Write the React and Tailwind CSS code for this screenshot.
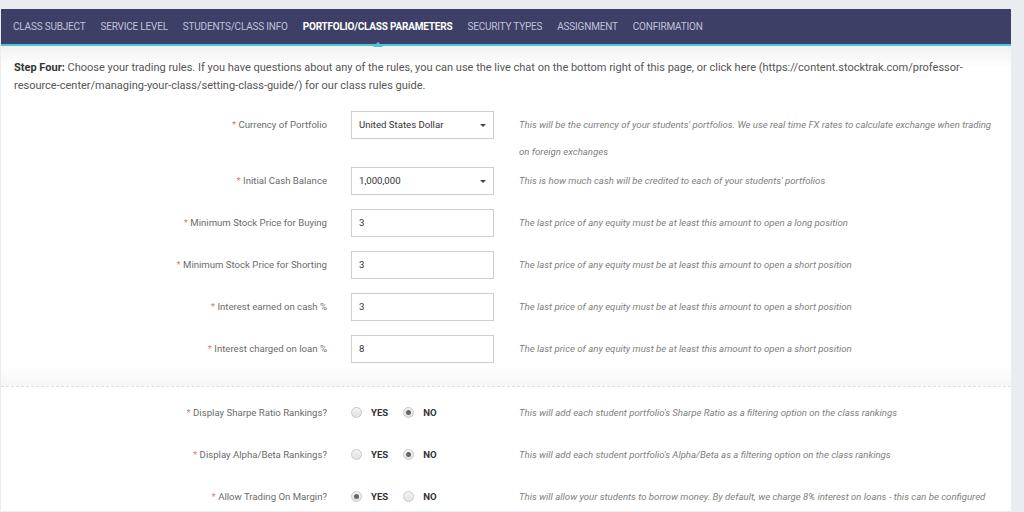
// Class setup wizard – step four (portfolio / class parameters)
import React from 'react';

const NAV = [
  'CLASS SUBJECT',
  'SERVICE LEVEL',
  'STUDENTS/CLASS INFO',
  'PORTFOLIO/CLASS PARAMETERS',
  'SECURITY TYPES',
  'ASSIGNMENT',
  'CONFIRMATION',
];

const FIELDS = [
  {
    label: 'Currency of Portfolio',
    value: 'United States Dollar',
    select: true,
    desc: "This will be the currency of your students' portfolios. We use real time FX rates to calculate exchange when trading on foreign exchanges",
  },
  {
    label: 'Initial Cash Balance',
    value: '1,000,000',
    select: true,
    desc: "This is how much cash will be credited to each of your students' portfolios",
  },
  {
    label: 'Minimum Stock Price for Buying',
    value: '3',
    desc: 'The last price of any equity must be at least this amount to open a long position',
  },
  {
    label: 'Minimum Stock Price for Shorting',
    value: '3',
    desc: 'The last price of any equity must be at least this amount to open a short position',
  },
  {
    label: 'Interest earned on cash %',
    value: '3',
    desc: 'The last price of any equity must be at least this amount to open a short position',
  },
  {
    label: 'Interest charged on loan %',
    value: '8',
    desc: 'The last price of any equity must be at least this amount to open a short position',
  },
];

const TOGGLES = [
  {
    label: 'Display Sharpe Ratio Rankings?',
    yes: false,
    desc: "This will add each student portfolio's Sharpe Ratio as a filtering option on the class rankings",
  },
  {
    label: 'Display Alpha/Beta Rankings?',
    yes: false,
    desc: "This will add each student portfolio's Alpha/Beta as a filtering option on the class rankings",
  },
  {
    label: 'Allow Trading On Margin?',
    yes: true,
    desc: 'This will allow your students to borrow money. By default, we charge 8% interest on loans - this can be configured',
  },
];

function Label({ text }) {
  return (
    <div className="w-[326px] shrink-0 text-right text-[9.6px] leading-[28px] text-[#6b6b6b]">
      <span className="text-[#e07a7a]">*</span> {text}
    </div>
  );
}

function Radio({ checked }) {
  return (
    <span className="flex h-[11px] w-[11px] items-center justify-center rounded-full border border-[#c9c9c9] bg-gradient-to-b from-[#f4f4f4] to-[#e2e2e2]">
      {checked && <span className="h-[5px] w-[5px] rounded-full bg-[#666]" />}
    </span>
  );
}

export default function App() {
  return (
    <div className="min-h-[512px] bg-[#e9ecf1] pt-[9px] font-['Roboto',sans-serif]">
      <div className="ml-[1px] w-[1010px] bg-white">
        {/* Wizard nav */}
        <nav className="relative flex h-[37px] items-center gap-[15px] border-b-2 border-[#4fc3d7] bg-[#3d3f66] pl-[12px] text-[10px] tracking-[-0.2px]">
          {NAV.map((n) => (
            <span
              key={n}
              className={
                n === 'PORTFOLIO/CLASS PARAMETERS'
                  ? 'relative font-bold text-white'
                  : 'text-[#bfc2da]'
              }
            >
              {n}
              {n === 'PORTFOLIO/CLASS PARAMETERS' && (
                <span className="absolute left-1/2 top-[23px] h-0 w-0 -translate-x-1/2 border-x-[5px] border-b-[5px] border-x-transparent border-b-[#4fc3d7]" />
              )}
            </span>
          ))}
        </nav>

        {/* Parameters */}
        <div className="bg-[linear-gradient(to_bottom,#f1f1f1,#ffffff_22px)] pt-[13px]">
          <p className="px-[13px] text-[11px] leading-[18px] text-[#555]">
            <b className="text-[#333]">Step Four:</b> Choose your trading rules. If you have questions about any of the rules, you can use the live chat on the bottom right of this page, or click here (https://content.stocktrak.com/professor-resource-center/managing-your-class/setting-class-guide/) for our class rules guide.
          </p>

          <div className="mt-[16px] bg-[linear-gradient(to_top,#f6f6f6,#ffffff_20px)] pb-[23px]">
            {FIELDS.map((f, i) => (
              <div key={f.label} className={`flex items-start ${i === 0 ? 'mb-[2px]' : 'mb-[14px]'} last:mb-0`}>
                <Label text={f.label} />
                <div className="ml-[24px] flex h-[28px] w-[143px] shrink-0 items-center justify-between border border-[#cfcfcf] bg-white pl-[7px] pr-[7px] text-[9.6px] text-[#333]">
                  <span>{f.value}</span>
                  {f.select && (
                    <span className="h-0 w-0 border-x-[3px] border-t-[3px] border-x-transparent border-t-[#444]" />
                  )}
                </div>
                <div className="ml-[25px] w-[480px] text-[9.6px] italic leading-[27px] text-[#808080]">
                  {f.desc}
                </div>
              </div>
            ))}
          </div>

          <div className="border-t border-dashed border-[#dcdfe3] pt-[12px]">
            {TOGGLES.map((t) => (
              <div key={t.label} className="mb-[14px] flex h-[28px] items-center">
                <Label text={t.label} />
                <div className="ml-[24px] flex w-[143px] shrink-0 items-center text-[9.6px] font-bold text-[#333]">
                  <Radio checked={t.yes} />
                  <span className="ml-[9px]">YES</span>
                  <span className="ml-[15px]"><Radio checked={!t.yes} /></span>
                  <span className="ml-[9px]">NO</span>
                </div>
                <div className="ml-[25px] text-[9.6px] italic text-[#808080]">{t.desc}</div>
              </div>
            ))}
          </div>
        </div>
      </div>
    </div>
  );
}
